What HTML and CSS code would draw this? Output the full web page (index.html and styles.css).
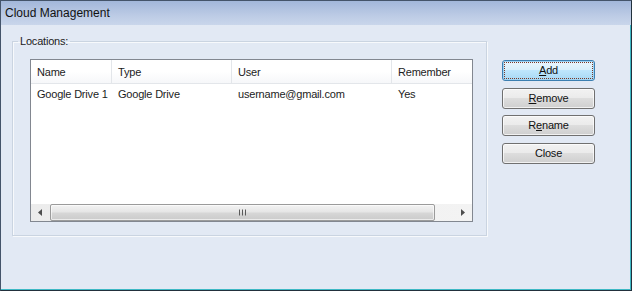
FILE: index.html
```html
<!DOCTYPE html>
<html>
<head>
<meta charset="utf-8">
<link rel="stylesheet" href="styles.css">
</head>
<body>
<div class="window">
  <div class="titlebar">Cloud Management</div>
  <div class="client">
    <fieldset class="group">
      <legend class="group-label">Locations:</legend>
      <div class="listview">
        <div class="lv-header">
          <div class="col c1">Name</div>
          <div class="col c2">Type</div>
          <div class="col c3">User</div>
          <div class="col c4">Remember</div>
        </div>
        <div class="lv-row">
          <div class="col c1">Google Drive 1</div>
          <div class="col c2">Google Drive</div>
          <div class="col c3">username@gmail.com</div>
          <div class="col c4">Yes</div>
        </div>
        <div class="lv-fill"></div>
        <div class="hscroll">
          <div class="sb-btn sb-left">
            <svg width="4" height="7" viewBox="0 0 4 7"><path d="M4 0 L0 3.5 L4 7 Z" fill="#4d4d4d"/></svg>
          </div>
          <div class="sb-thumb">
            <svg width="7" height="7" viewBox="0 0 7 7"><path d="M0.5 0.5V6.5M3.5 0.5V6.5M6.5 0.5V6.5" stroke="#5a5a5a" stroke-width="1"/></svg>
          </div>
          <div class="sb-track"></div>
          <div class="sb-btn sb-right">
            <svg width="4" height="7" viewBox="0 0 4 7"><path d="M0 0 L4 3.5 L0 7 Z" fill="#4d4d4d"/></svg>
          </div>
        </div>
      </div>
    </fieldset>
    <div class="buttons">
      <button class="btn btn-default"><span class="u">A</span>dd</button>
      <button class="btn"><span class="u">R</span>emove</button>
      <button class="btn">R<span class="u">e</span>name</button>
      <button class="btn">Close</button>
    </div>
  </div>
</div>
</body>
</html>
```

FILE: styles.css
```css
* { box-sizing: border-box; }
html, body { margin: 0; padding: 0; }
body {
  width: 632px;
  height: 291px;
  overflow: hidden;
  font-family: "Liberation Sans", Arial, sans-serif;
  font-size: 11px;
  letter-spacing: -0.2px;
  color: #1c1c1c;
}
.window {
  width: 632px;
  height: 291px;
  display: flex;
  flex-direction: column;
  background: #e2e9f4;
  border-left: 1px solid #44546a;
  border-top: 1px solid #44546a;
  border-right: 1px solid #22303c;
  border-bottom: 1px solid #22303c;
  box-shadow: inset -1px -1px 0 #3db8c4;
}
.titlebar {
  height: 24px;
  padding-left: 4px;
  display: flex;
  align-items: center;
  font-size: 12px;
  letter-spacing: 0;
  color: #111;
  background: linear-gradient(#a2b7da, #bccbe5 60%, #c9d6eb);
  flex: none;
}
.client {
  display: flex;
  align-items: flex-start;
  padding-left: 11px;
}
.group {
  margin: 9px 0 0 0;
  padding: 0;
  width: 475px;
  border: 1px solid #cad4e1;
  box-shadow: inset 1px 1px 0 #f7f9fc, 1px 1px 0 #f7f9fc;
  min-width: 0;
}
.group-label {
  margin-left: 5px;
  padding: 0 2px;
  line-height: 14px;
  font-size: 11px;
}
.listview {
  margin: 11px 13px 13px 17px;
  width: 443px;
  height: 163px;
  border: 1px solid #828790;
  background: #fff;
  display: flex;
  flex-direction: column;
}
.lv-header, .lv-row {
  display: grid;
  grid-template-columns: 81px 120px 160px 1fr;
}
.lv-header {
  height: 24px;
  background: linear-gradient(#ffffff, #ffffff 50%, #f6f7f9);
  border-bottom: 1px solid #e3e6ea;
}
.lv-header .col {
  border-right: 1px solid #e3e6ea;
}
.lv-header .c4 { border-right: none; }
.col {
  display: flex;
  align-items: center;
  padding-left: 6px;
  white-space: nowrap;
  overflow: hidden;
}
.lv-row {
  height: 20px;
}
.lv-fill { flex: 1; }
.hscroll {
  height: 17px;
  display: flex;
  background: linear-gradient(90deg, #ececec, #f3f3f3);
  flex: none;
}
.sb-btn {
  width: 18px;
  display: flex;
  align-items: center;
  justify-content: center;
  flex: none;
}
.sb-left { margin-right: 1px; }
.sb-thumb {
  width: 385px;
  border: 1px solid #9b9b9b;
  border-radius: 2px;
  background: linear-gradient(#f3f3f3, #e6e6e6 45%, #d6d6d6 55%, #cbcbcb);
  box-shadow: inset 0 0 0 1px rgba(255,255,255,0.6);
  display: flex;
  align-items: center;
  justify-content: center;
  flex: none;
}
.sb-track { flex: 1; }
.buttons {
  margin-left: 15px;
  margin-top: 35px;
  display: flex;
  flex-direction: column;
  gap: 6.5px;
}
.btn {
  width: 93px;
  height: 21px;
  padding: 0 0 1px;
  font-family: "Liberation Sans", Arial, sans-serif;
  font-size: 11px;
  letter-spacing: -0.2px;
  color: #111;
  border: 1px solid #707070;
  border-radius: 3px;
  background: linear-gradient(#f2f2f2, #ebebeb 45%, #dddddd 50%, #cfcfcf);
  box-shadow: inset 0 0 0 1px rgba(255,255,255,0.7);
}
.btn-default {
  border-color: #3c7fb1;
  background: linear-gradient(#eaf6fd, #d9f0fc 45%, #bee6fd 50%, #a7d9f5);
  box-shadow: inset 0 0 0 1px #9fd4f4;
  outline: 1px dotted #7a3a28;
  outline-offset: -3px;
}
.u { text-decoration: underline; }
```
